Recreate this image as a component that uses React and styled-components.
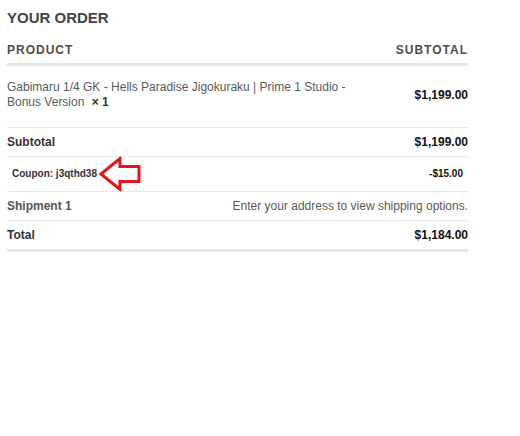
import React from "react";
import styled, { createGlobalStyle } from "styled-components";

const GlobalStyle = createGlobalStyle`
  body {
    margin: 0;
    background: #fff;
    font-family: "Liberation Sans", Arial, sans-serif;
  }
`;

const Container = styled.section`
  width: 461px;
  padding: 9px 7px 0;
`;

const Heading = styled.h3`
  margin: 0;
  font-size: 15px;
  line-height: 18px;
  font-weight: 700;
  color: #444;
`;

const Table = styled.div`
  display: flex;
  flex-direction: column;
`;

const HeadRow = styled.div`
  display: flex;
  justify-content: space-between;
  padding: 16px 0 6px;
  border-bottom: 3px solid #e6e6e6;
  font-size: 12px;
  line-height: 14px;
  font-weight: 700;
  letter-spacing: 1px;
  color: #4d4d4d;
`;

const Row = styled.div`
  display: flex;
  justify-content: space-between;
  align-items: center;
  gap: 16px;
  padding: ${({ $pad }) => $pad || "7px 0"};
  border-bottom: ${({ $last }) =>
    $last ? "3px solid #e6e6e6" : "1px solid #e8e8e8"};
  font-size: 12px;
  line-height: 14px;
`;

const ProductName = styled.span`
  color: #5a5a5a;
  line-height: 15px;
  max-width: 360px;
`;

const Qty = styled.strong`
  color: #333;
  margin-left: 4px;
`;

const Label = styled.span`
  font-weight: 700;
  color: ${({ $muted }) => ($muted ? "#555" : "#333")};
`;

const Amount = styled.span`
  font-weight: 700;
  color: #111;
`;

const Note = styled.span`
  color: #5a5a5a;
`;

const CouponRow = styled(Row)`
  padding: 0 5px;
  height: 34px;
  font-size: 10px;
`;

const CouponLabel = styled.span`
  position: relative;
  font-weight: 700;
  color: #333;
`;

const Arrow = styled.svg`
  position: absolute;
  left: 100%;
  top: 50%;
  margin-left: 1px;
  transform: translateY(-50%);
`;

function PointerArrow() {
  return (
    <Arrow width="44" height="35" viewBox="0 0 44 35">
      <polygon
        points="3,17.5 22,2 22,10 41,10 41,25 22,25 22,33"
        fill="none"
        stroke="#e3161e"
        strokeWidth="3"
        strokeLinejoin="miter"
      />
    </Arrow>
  );
}

export default function App() {
  return (
    <>
      <GlobalStyle />
      <Container>
        <Heading>YOUR ORDER</Heading>
        <Table>
          <HeadRow>
            <span>PRODUCT</span>
            <span>SUBTOTAL</span>
          </HeadRow>
          <Row $pad="14px 0 17px">
            <ProductName>
              Gabimaru 1/4 GK - Hells Paradise Jigokuraku | Prime 1 Studio -
              Bonus Version <Qty>× 1</Qty>
            </ProductName>
            <Amount>$1,199.00</Amount>
          </Row>
          <Row>
            <Label>Subtotal</Label>
            <Amount>$1,199.00</Amount>
          </Row>
          <CouponRow>
            <CouponLabel>
              Coupon: j3qthd38
              <PointerArrow />
            </CouponLabel>
            <Amount>-$15.00</Amount>
          </CouponRow>
          <Row>
            <Label $muted>Shipment 1</Label>
            <Note>Enter your address to view shipping options.</Note>
          </Row>
          <Row $last>
            <Label>Total</Label>
            <Amount>$1,184.00</Amount>
          </Row>
        </Table>
      </Container>
    </>
  );
}
